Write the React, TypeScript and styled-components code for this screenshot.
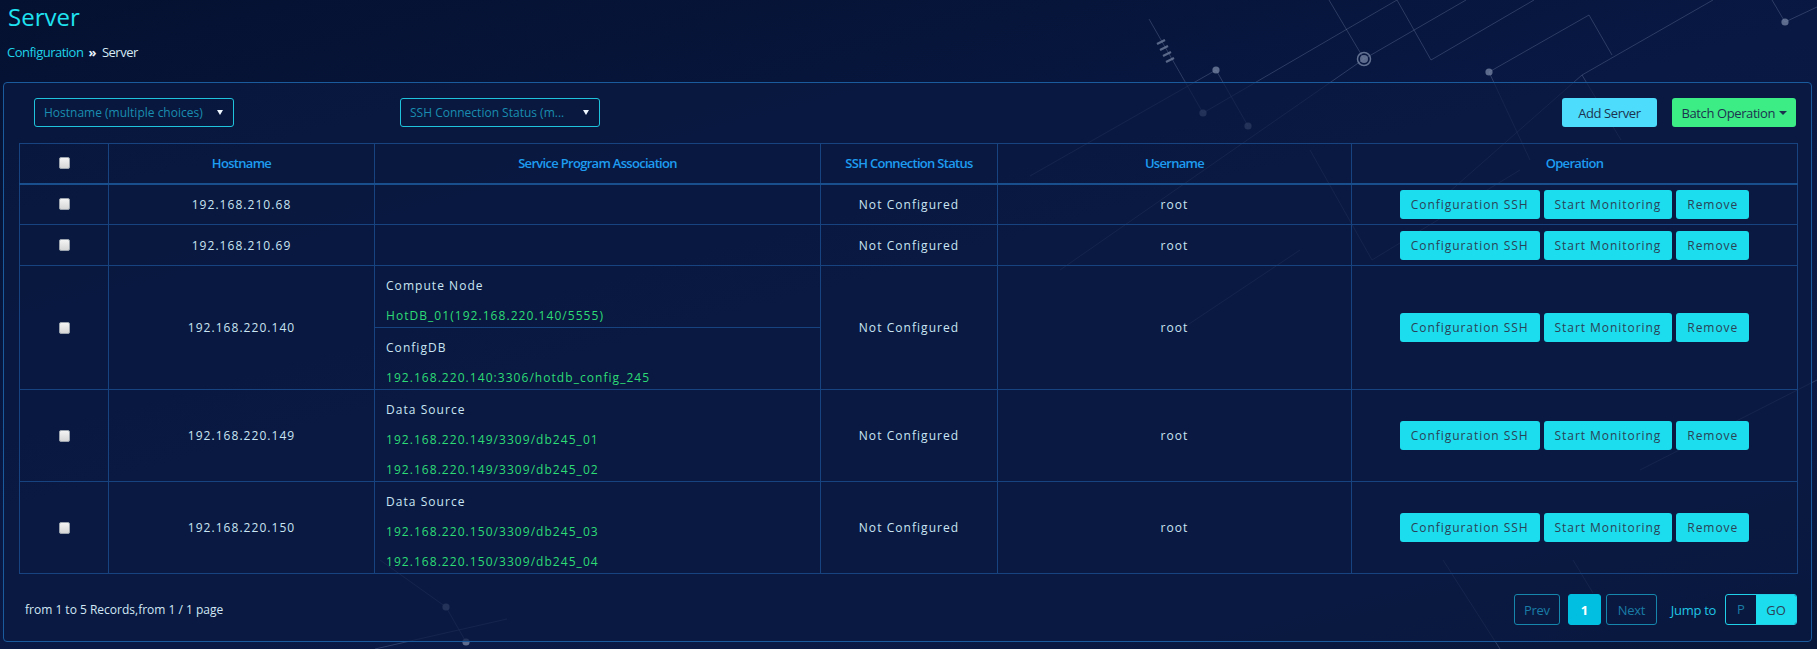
import React from "react";
import styled, { createGlobalStyle } from "styled-components";

const GlobalStyle = createGlobalStyle`
  html, body {
    margin: 0;
    padding: 0;
    background: #06132f;
    font-family: "Open Sans", "DejaVu Sans", sans-serif;
  }
  * {
    box-sizing: border-box;
  }
`;

const Page = styled.div`
  position: relative;
  width: 1817px;
  height: 649px;
  padding: 0 5px 0 3px;
  overflow: hidden;
  background: linear-gradient(165deg, #051130 0%, #081843 45%, #0a1a45 75%, #081638 100%);
`;

const Decor = styled.svg`
  position: absolute;
  left: 0;
  top: 0;
  pointer-events: none;
`;

const Content = styled.div`
  position: relative;
`;

const Title = styled.h1`
  margin: 0;
  padding-left: 5px;
  font-size: 24px;
  font-weight: 400;
  line-height: 33px;
  color: #1fe3f1;
`;

const Crumbs = styled.div`
  margin-top: 10px;
  padding-left: 4px;
  height: 18px;
  line-height: 18px;
  font-size: 13px;
  letter-spacing: -0.5px;
  color: #d4e9f4;
`;

const CrumbLink = styled.span`
  color: #1fd3e8;
`;

const CrumbSep = styled.span`
  margin: 0 6px 0 5px;
  font-weight: 700;
  color: #e6f3ff;
`;

const Panel = styled.section`
  margin-top: 21px;
  width: 1809px;
  border: 1px solid #1a5b9e;
  border-radius: 4px;
  padding: 15px 14px 16px 15px;
  background: rgba(10, 26, 66, 0.7);
`;

const FilterBar = styled.div`
  display: flex;
  align-items: center;
  height: 29px;
  padding: 0 1px 0 15px;
`;

const Select = styled.div<{ $offset?: number }>`
  display: flex;
  align-items: center;
  justify-content: space-between;
  width: 200px;
  height: 29px;
  margin-left: ${(p) => p.$offset || 0}px;
  padding: 0 9px 0 9px;
  border: 1px solid #1fc3dc;
  border-radius: 3px;
  font-size: 12px;
  color: #1a8db0;
  white-space: nowrap;
`;

const Arrow = styled.span`
  width: 0;
  height: 0;
  margin-right: 1px;
  border-left: 3.5px solid transparent;
  border-right: 3.5px solid transparent;
  border-top: 5px solid #eef6ff;
`;

const Actions = styled.div`
  display: flex;
  gap: 15px;
  margin-left: auto;
`;

const TopButton = styled.button<{ $tone: "cyan" | "green" }>`
  display: flex;
  align-items: center;
  gap: 4px;
  height: 29px;
  padding: 0 ${(p) => (p.$tone === "green" ? 9 : 16)}px 0 ${(p) => (p.$tone === "green" ? 10 : 16)}px;
  border: none;
  border-radius: 3px;
  background: ${(p) => (p.$tone === "green" ? "#3ced86" : "#4ddcfb")};
  color: #1c3350;
  font-family: inherit;
  font-size: 13px;
  letter-spacing: -0.4px;
`;

const Caret = styled.span`
  width: 0;
  height: 0;
  border-left: 4px solid transparent;
  border-right: 4px solid transparent;
  border-top: 4px solid #1c3350;
`;

const Table = styled.table`
  margin-top: 16px;
  width: 1778px;
  border-collapse: collapse;
  table-layout: fixed;
  border: 1px solid #184a85;
`;

const Th = styled.th`
  height: 40px;
  padding: 0;
  border: 1px solid #174480;
  border-bottom: 2px solid #1a4f8e;
  font-size: 13px;
  font-weight: 600;
  letter-spacing: -0.7px;
  color: #1e9cf0;
  text-align: center;
  vertical-align: middle;
`;

const Td = styled.td<{ $assoc?: boolean }>`
  height: 41px;
  padding: 0;
  border: 1px solid #174480;
  font-size: 12px;
  letter-spacing: 1.05px;
  color: #cae5f3;
  text-align: ${(p) => (p.$assoc ? "left" : "center")};
  vertical-align: ${(p) => (p.$assoc ? "top" : "middle")};
`;

const Check = styled.input.attrs({ type: "checkbox" })`
  appearance: none;
  display: block;
  width: 11px;
  height: 12px;
  margin: 0 auto;
  border: 1px solid #9aa3ad;
  border-radius: 2px;
  background: linear-gradient(#f4f4f4, #d6d6d6);
`;

const Group = styled.div`
  padding: 5px 10px 0 11px;
  & + & {
    border-top: 1px solid #174480;
  }
`;

const Line = styled.div<{ $value?: boolean }>`
  line-height: 30px;
  white-space: nowrap;
  color: ${(p) => (p.$value ? "#2edc76" : "#cae5f3")};
  &:last-child {
    margin-bottom: -4px;
  }
`;

const OpGroup = styled.div`
  display: flex;
  justify-content: center;
  gap: 4px;
`;

const OpButton = styled.button`
  height: 29px;
  padding: 0 11px;
  border: none;
  border-radius: 3px;
  background: #1cdded;
  color: #2a4257;
  font-family: inherit;
  font-size: 12px;
  letter-spacing: 0.95px;
`;

const Footer = styled.div`
  display: flex;
  align-items: center;
  justify-content: space-between;
  margin-top: 20px;
  height: 31px;
`;

const Summary = styled.span`
  padding-left: 6px;
  font-size: 12px;
  color: #d3e8f4;
`;

const Pager = styled.div`
  display: flex;
  align-items: center;
`;

const PageButton = styled.button<{ $active?: boolean; $w: number; $gap?: number }>`
  width: ${(p) => p.$w}px;
  height: 31px;
  margin-left: ${(p) => p.$gap || 0}px;
  padding: 0;
  border: 1px solid ${(p) => (p.$active ? "#00bfe0" : "#1686ad")};
  border-radius: 3px;
  background: ${(p) => (p.$active ? "#00bfe0" : "transparent")};
  color: ${(p) => (p.$active ? "#ffffff" : "#1a7ca6")};
  font-family: inherit;
  font-size: 13px;
  letter-spacing: -0.3px;
  font-weight: ${(p) => (p.$active ? 700 : 400)};
`;

const JumpLabel = styled.span`
  margin: 0 9px 0 14px;
  font-size: 13px;
  letter-spacing: -0.3px;
  color: #1fc7e6;
`;

const Jump = styled.div`
  display: flex;
  height: 31px;
  border: 1px solid #1fd0e8;
  border-radius: 3px;
  overflow: hidden;
`;

const JumpInput = styled.div`
  width: 30px;
  line-height: 29px;
  text-align: center;
  font-size: 13px;
  color: #1a7ca6;
`;

const GoButton = styled.button`
  width: 40px;
  padding: 0;
  border: none;
  background: #1cdded;
  color: #2a4257;
  font-family: inherit;
  font-size: 13px;
`;

type Assoc = { label: string; items: string[] };
type Server = { host: string; groups: Assoc[] };

const servers: Server[] = [
  { host: "192.168.210.68", groups: [] },
  { host: "192.168.210.69", groups: [] },
  {
    host: "192.168.220.140",
    groups: [
      { label: "Compute Node", items: ["HotDB_01(192.168.220.140/5555)"] },
      { label: "ConfigDB", items: ["192.168.220.140:3306/hotdb_config_245"] },
    ],
  },
  {
    host: "192.168.220.149",
    groups: [
      {
        label: "Data Source",
        items: ["192.168.220.149/3309/db245_01", "192.168.220.149/3309/db245_02"],
      },
    ],
  },
  {
    host: "192.168.220.150",
    groups: [
      {
        label: "Data Source",
        items: ["192.168.220.150/3309/db245_03", "192.168.220.150/3309/db245_04"],
      },
    ],
  },
];

const widths = [89, 266, 446, 177, 354, 446];

const Circuit = () => {
  const line = "rgba(150,168,200,0.26)";
  const dot = "rgba(120,135,165,0.75)";
  const dots: [number, number][] = [
    [1203, 113],
    [1216, 70],
    [1248, 126],
    [1489, 72],
    [1785, 22],
    [446, 607],
    [466, 642],
  ];
  return (
    <Decor width={1817} height={649} viewBox="0 0 1817 649">
      <g stroke={line} strokeWidth={1} fill="none">
        <path d="M1149 19 L1203 113" />
        <path d="M1203 113 L1397 0" />
        <path d="M1030 176 L1216 70 L1248 126" />
        <path d="M1329 0 L1364 59" />
        <path d="M1060 270 L1364 59 L1466 0" />
        <path d="M1397 0 L1431 60 L1534 0" />
        <path d="M1530 160 L1489 72 L1589 15 L1612 55" />
        <path d="M1440 200 L1582 75 L1713 0" />
        <path d="M1582 75 L1621 140" />
        <path d="M1772 0 L1785 22 L1817 7" />
        <path d="M1310 150 L1372 260 L1520 170" />
        <path d="M1180 330 L1300 250" />
        <path d="M446 607 L466 642" />
        <path d="M375 649 L507 619" />
        <path d="M446 607 L380 560" />
        <path d="M1443 560 L1500 649" />
        <path d="M1573 560 L1593 593" />
        <path d="M1640 470 L1817 380" />
      </g>
      <g stroke="rgba(110,125,155,0.8)" strokeWidth={2.2}>
        <path d="M1157 44 L1165 40" />
        <path d="M1160 50 L1168 46" />
        <path d="M1163 56 L1171 52" />
        <path d="M1166 62 L1174 58" />
      </g>
      <circle cx={1364} cy={59} r={6.5} stroke="rgba(120,135,165,0.8)" strokeWidth={1.5} fill="none" />
      <circle cx={1364} cy={59} r={4} fill={dot} />
      {dots.map(([x, y]) => (
        <circle key={`${x}-${y}`} cx={x} cy={y} r={3.6} fill={dot} />
      ))}
    </Decor>
  );
};

const App = () => {
  return (
    <>
      <GlobalStyle />
      <Page>
        <Circuit />
        <Content>
          <Title>Server</Title>
          <Crumbs>
            <CrumbLink>Configuration</CrumbLink>
            <CrumbSep>»</CrumbSep>
            Server
          </Crumbs>
          <Panel>
            <FilterBar>
              <Select>
                Hostname (multiple choices)
                <Arrow />
              </Select>
              <Select $offset={166}>
                SSH Connection Status (m...
                <Arrow />
              </Select>
              <Actions>
                <TopButton $tone="cyan">Add Server</TopButton>
                <TopButton $tone="green">
                  Batch Operation
                  <Caret />
                </TopButton>
              </Actions>
            </FilterBar>
            <Table>
              <colgroup>
                {widths.map((w, i) => (
                  <col key={i} style={{ width: w }} />
                ))}
              </colgroup>
              <thead>
                <tr>
                  <Th>
                    <Check />
                  </Th>
                  <Th>Hostname</Th>
                  <Th>Service Program Association</Th>
                  <Th>SSH Connection Status</Th>
                  <Th>Username</Th>
                  <Th>Operation</Th>
                </tr>
              </thead>
              <tbody>
                {servers.map((s) => (
                  <tr key={s.host}>
                    <Td>
                      <Check />
                    </Td>
                    <Td>{s.host}</Td>
                    <Td $assoc>
                      {s.groups.map((g) => (
                        <Group key={g.label}>
                          <Line>{g.label}</Line>
                          {g.items.map((item) => (
                            <Line key={item} $value>
                              {item}
                            </Line>
                          ))}
                        </Group>
                      ))}
                    </Td>
                    <Td>Not Configured</Td>
                    <Td>root</Td>
                    <Td>
                      <OpGroup>
                        <OpButton>Configuration SSH</OpButton>
                        <OpButton>Start Monitoring</OpButton>
                        <OpButton>Remove</OpButton>
                      </OpGroup>
                    </Td>
                  </tr>
                ))}
              </tbody>
            </Table>
            <Footer>
              <Summary>from 1 to 5 Records,from 1 / 1 page</Summary>
              <Pager>
                <PageButton $w={46}>Prev</PageButton>
                <PageButton $w={33} $gap={8} $active>
                  1
                </PageButton>
                <PageButton $w={51} $gap={5}>
                  Next
                </PageButton>
                <JumpLabel>Jump to</JumpLabel>
                <Jump>
                  <JumpInput>P</JumpInput>
                  <GoButton>GO</GoButton>
                </Jump>
              </Pager>
            </Footer>
          </Panel>
        </Content>
      </Page>
    </>
  );
};

export default App;
